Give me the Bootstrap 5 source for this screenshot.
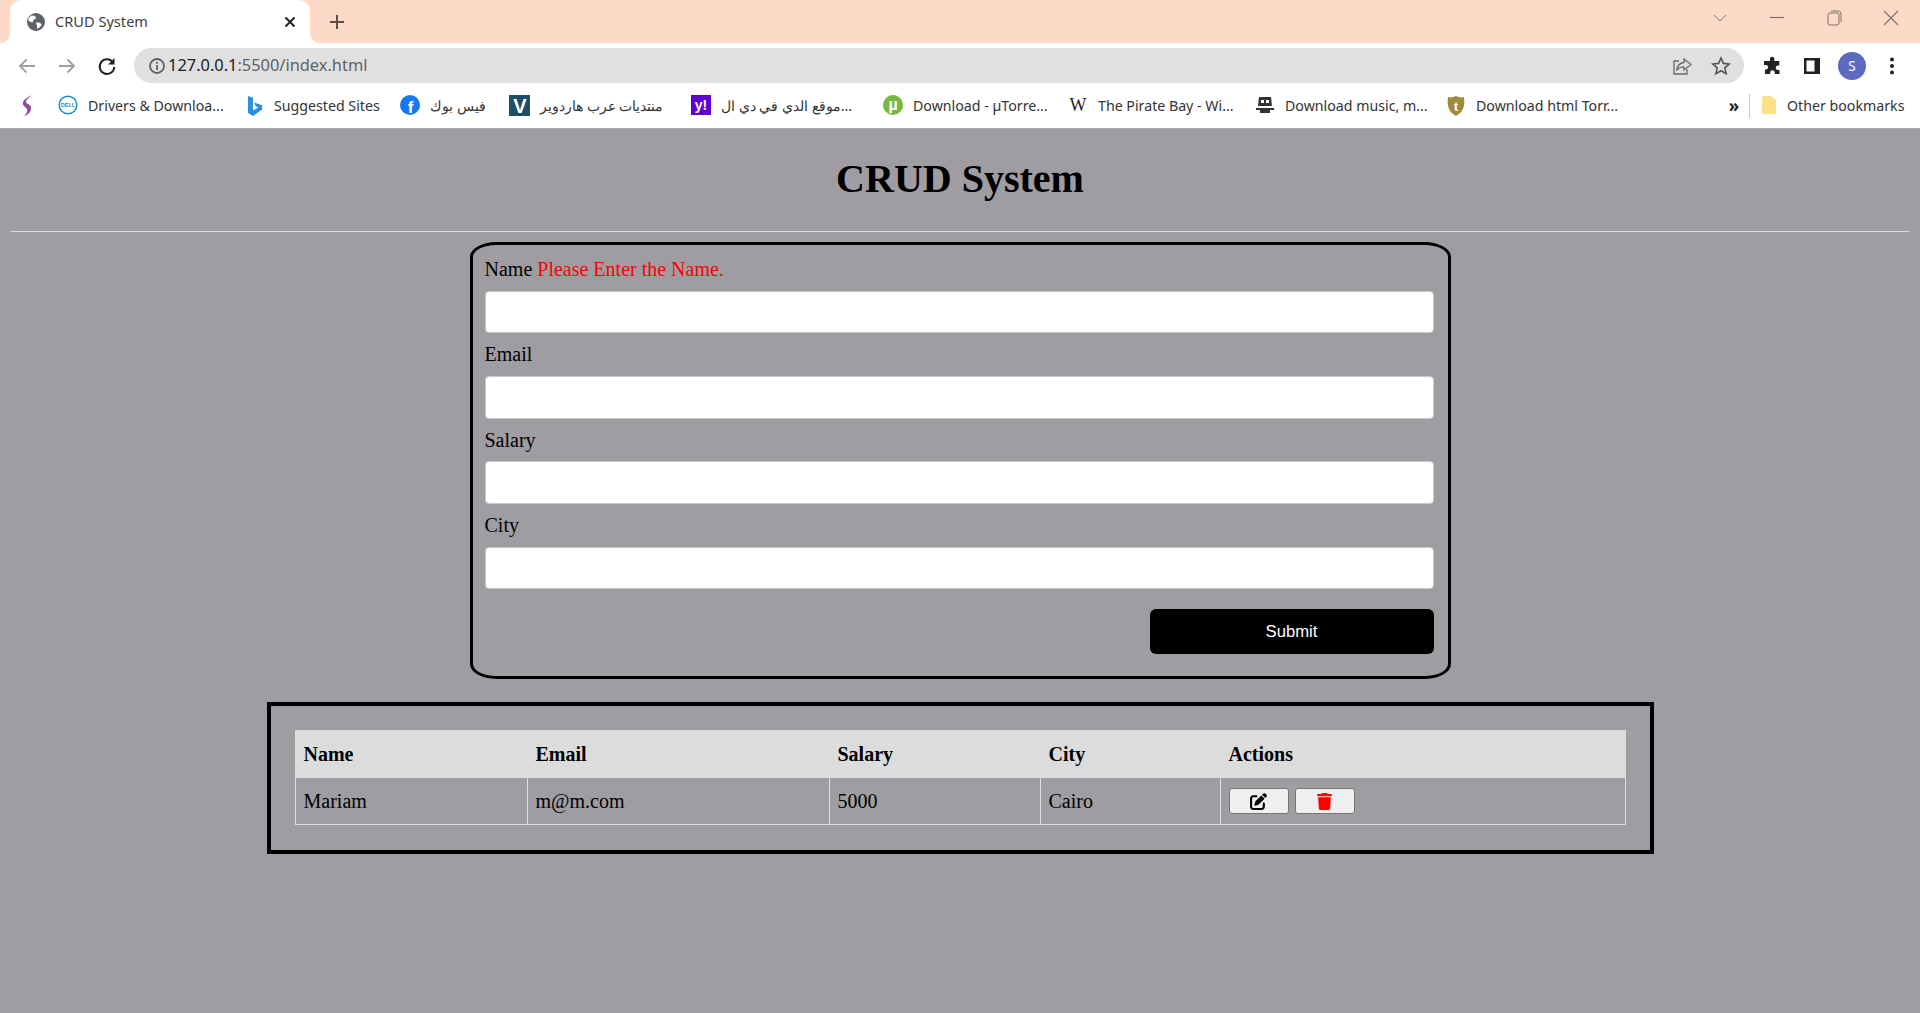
<!doctype html>
<html lang="en">
<head>
<meta charset="utf-8">
<title>CRUD System</title>
<link href="https://cdn.jsdelivr.net/npm/bootstrap@5.3.0/dist/css/bootstrap.min.css" rel="stylesheet">
<style>
html,body{height:100%}
body{background:#9f9da1;color:#000;font-family:"Liberation Serif","Times New Roman",serif;font-size:20px;overflow:hidden}
.ui{font-family:"Noto Sans","Open Sans",sans-serif}
svg{display:block;flex:none}

.tabstrip{height:43px;background:#fcdac7;padding-left:10px}
.tabitem{width:300px;height:43px;background:#fff;border-radius:11px 11px 0 0;position:relative;padding:0 10px 0 16px;font-size:14.6px;color:#3c4043}
.tabitem::before,.tabitem::after{content:"";position:absolute;bottom:0;width:10px;height:10px}
.tabitem::before{left:-10px;background:radial-gradient(circle at 0 0,transparent 9.5px,#fff 10.5px)}
.tabitem::after{right:-10px;background:radial-gradient(circle at 100% 0,transparent 9.5px,#fff 10.5px)}
.tabitem-title{margin-left:9px}
.newtab{margin-left:17px}
.winctl{gap:37px;padding:8px 19px 0 0;align-self:flex-start}

.toolbar{height:40px;background:#fff;padding-left:7px}
.toolbtn{width:40px;height:35px;margin-top:5px}
.omni{width:1610px;height:35px;margin:5px 8px 0 7px;background:#e0e0e0;border-radius:18px;padding:0 13px;font-size:16.4px;color:#5f6368}
.omni-url{margin-left:1px}
.omni-host{color:#202124}
.omni-gap{gap:19px}
.avatar{width:28px;height:28px;background:#5c6bc0;color:#fff;font-size:13.5px;line-height:28px;text-align:center;border-radius:50%}

.bmbar{height:46px;background:#fff;border-bottom:1px solid #a9a9a9;padding-left:18px;display:grid;grid-template-columns:40px 186px 156px 109px 182px 192px 185px 187px 191px 273px 30px 12px 1fr;align-items:center;font-size:14.2px;color:#333;white-space:nowrap}
.bmitem{display:flex;align-items:center;gap:10px}
.bmsep{width:1px;height:24px;background:#c8c8c8}
.bmmore{font-weight:700;font-size:17px;line-height:1;color:#222}

.pagetitle{font-size:40px;font-weight:700;line-height:46px;text-align:center;margin:0;padding:27px 0 29px}
.pagerule{margin:0 11px;border:0;height:1px;background:#dcdcdc;opacity:1}
.formbox{width:981px;margin:10px auto 0;border:3px solid #000;border-radius:26px/15px;padding:3px 14px 22px 12px}
.fieldlabel{display:block;line-height:42.67px;margin:0}
.fielderr{color:#f00}
.fieldinput{height:42.67px;padding:4px 12px;font-size:20px;border:1px solid #c8c8c8;border-radius:4px;background:#fff}
.submitbtn{width:284px;height:45px;margin-top:20px;background:#000;color:#fff;border:0;border-radius:6px;font-family:"Liberation Sans",Arial,sans-serif;font-size:16.67px}
.submitbtn:hover{background:#000;color:#fff}
.tablebox{width:1387px;margin:23px auto 0;border:4px solid #000;padding:24px 25px 25px 24px}
.datatable{--bs-table-bg:transparent;--bs-table-color:#000;--bs-table-border-color:#dcdcdc;table-layout:fixed;width:1330px;margin:0;font-size:20px;border-color:#dcdcdc}
.datatable>*>*>*{padding:0 11px;vertical-align:middle;border-width:1px;border-color:#dcdcdc;box-shadow:none}
.datatable thead th{background:#dcdcdc;height:46px;font-weight:700}
.datatable tbody td{height:47px}
.c1{width:232px}.c2{width:302px}.c3{width:211px}.c4{width:180px}.c5{width:405px}
.rowbtn{width:60px;height:26px;padding:0;background:#efefef;border:1px solid #767676;border-radius:3px;display:flex;align-items:center;justify-content:center}
.rowgap{gap:6px}
</style>
</head>
<body>

<header class="ui">
  <div class="tabstrip d-flex align-items-center">
    <div class="tabitem d-flex align-items-center">
      <svg width="20" height="20" viewBox="0 0 20 20"><circle cx="10" cy="10" r="9" fill="#5f6368"/><path d="M6 3.5c2 0 3.5.7 4 2 .4 1.200-1.200 1.500-2.200 2.300-.9.800-.3 2-1.500 2.400-1.200.3-3-.8-4.300-2.200C3 5.500 4.300 4 6 3.500zM10.500 10.500c1.800-.4 4 .2 5 1.500.3.600-.4 2-1.500 3-.9.800-2.200 1.800-2.800 1.200-.5-.8.100-1.700-.2-2.700-.3-1-1.500-2.400-.5-3z" fill="#fff"/></svg>
      <span class="tabitem-title">CRUD System</span>
      <svg class="ms-auto" width="20" height="20" viewBox="0 0 20 20"><path d="M5.500 5.500l9 9M14.500 5.500l-9 9" stroke="#222" stroke-width="2" fill="none"/></svg>
    </div>
    <svg class="newtab" width="20" height="20" viewBox="0 0 20 20"><path d="M10 3v14M3 10h14" stroke="#5a4f4a" stroke-width="2" fill="none"/></svg>
    <div class="winctl d-flex ms-auto">
      <svg width="20" height="20" viewBox="0 0 20 20"><path d="M4 7l6 6 6-6" stroke="#8d8480" stroke-width="1" fill="none"/></svg>
      <svg width="20" height="20" viewBox="0 0 20 20"><path d="M3 9.500h14" stroke="#7a716d" stroke-width="1.200" fill="none"/></svg>
      <svg width="20" height="20" viewBox="0 0 20 20"><rect x="4" y="5" width="11" height="12" rx="2" stroke="#7a716d" fill="none"/><path d="M7 3h7a3 3 0 0 1 3 3v8" stroke="#7a716d" fill="none"/></svg>
      <svg width="20" height="20" viewBox="0 0 20 20"><path d="M3 3l14 14M17 3L3 17" stroke="#7a716d" stroke-width="1.100" fill="none"/></svg>
    </div>
  </div>

  <div class="toolbar d-flex">
    <div class="toolbtn d-flex align-items-center justify-content-center"><svg width="20" height="20" viewBox="0 0 20 20"><path d="M18 10H3M9.500 3.500L3 10l6.500 6.500" stroke="#9aa0a6" stroke-width="1.800" fill="none"/></svg></div>
    <div class="toolbtn d-flex align-items-center justify-content-center"><svg width="20" height="20" viewBox="0 0 20 20"><path d="M2 10h15M10.500 3.500L17 10l-6.500 6.500" stroke="#9aa0a6" stroke-width="1.800" fill="none"/></svg></div>
    <div class="toolbtn d-flex align-items-center justify-content-center"><svg width="20" height="20" viewBox="0 0 20 20"><path d="M16 6.500A7.300 7.300 0 1 0 17.300 11" stroke="#222" stroke-width="2" fill="none"/><path d="M17.500 2v6.500H11z" fill="#222"/></svg></div>
    <div class="omni d-flex align-items-center">
      <svg width="20" height="20" viewBox="0 0 20 20"><circle cx="10" cy="10" r="7" stroke="#5f6368" stroke-width="1.800" fill="none"/><path d="M10 9v5M10 6v1.800" stroke="#5f6368" stroke-width="1.800" fill="none"/></svg>
      <span class="omni-url"><span class="omni-host">127.0.0.1</span>:5500/index.html</span>
      <div class="d-flex omni-gap ms-auto">
        <svg width="20" height="20" viewBox="0 0 20 20"><path d="M7 5H2v13h13v-5" stroke="#6a6a6a" stroke-width="1.300" fill="none"/><path d="M12 3l7 5.500-7 5.500v-3.200c-3.500 0-5.700 1-7.500 3.700.6-4.500 3-7.500 7.500-8z" stroke="#6a6a6a" stroke-width="1.300" fill="none"/></svg>
        <svg width="20" height="20" viewBox="0 0 20 20"><path d="M10 2l2.400 5.400 5.800.6-4.400 3.900 1.300 5.800L10 14.700l-5.100 3 1.300-5.800L1.800 8l5.800-.6z" stroke="#555" stroke-width="1.600" fill="none"/></svg>
      </div>
    </div>
    <div class="toolbtn d-flex align-items-center justify-content-center"><svg width="20" height="20" viewBox="0 0 20 20"><path d="M8 2.500a2.200 2.200 0 0 1 4.300 0V5h5v4.500h-1.800a2.300 2.300 0 0 0 0 4.500H17.500v4h-4.700v-1.500a2.300 2.300 0 0 0-4.600 0V18H3v-4.500h1.300a2.300 2.300 0 0 0 0-4.500H2V5h6z" fill="#202124"/></svg></div>
    <div class="toolbtn d-flex align-items-center justify-content-center"><svg width="20" height="20" viewBox="0 0 20 20"><rect x="2" y="2" width="16" height="16" fill="#202124"/><rect x="4.500" y="4.500" width="8" height="11" fill="#fff"/></svg></div>
    <div class="toolbtn d-flex align-items-center justify-content-center"><div class="avatar">S</div></div>
    <div class="toolbtn d-flex align-items-center justify-content-center"><svg width="20" height="20" viewBox="0 0 20 20"><circle cx="10" cy="3.500" r="2" fill="#202124"/><circle cx="10" cy="10" r="2" fill="#202124"/><circle cx="10" cy="16.500" r="2" fill="#202124"/></svg></div>
  </div>

  <nav class="bmbar">
    <div class="bmitem"><svg width="20" height="24" viewBox="0 0 20 24"><path d="M13 1c-1 3-5 4-5 7 0 2 5 2 5 6 0 4-3 7-7 8 2-2 4-4 3-7-1-2-5-3-4-7 1-3 5-4 8-7z" fill="#8e4a9c"/></svg></div>
    <div class="bmitem"><svg width="20" height="20" viewBox="0 0 20 20"><circle cx="10" cy="10" r="8.800" fill="#fff" stroke="#1a8ec9" stroke-width="1.500"/><text x="10" y="11.800" text-anchor="middle" font-size="5.500" font-weight="700" font-family="Liberation Sans" fill="#1a8ec9">DELL</text></svg><span>Drivers &amp; Downloa...</span></div>
    <div class="bmitem"><svg width="20" height="24" viewBox="0 0 20 24"><path d="M4 2l5 1.700v12.800l5.300-3-2.700-1.200-1.500-3.800 8 2.800v4.300L9 22l-5-3z" fill="#2b8fe0"/></svg><span>Suggested Sites</span></div>
    <div class="bmitem"><svg width="20" height="20" viewBox="0 0 20 20"><circle cx="10" cy="10" r="10" fill="#1877f2"/><text x="10.500" y="18" text-anchor="middle" font-size="17" font-weight="700" font-family="Liberation Sans" fill="#fff">f</text></svg><span>فيس بوك</span></div>
    <div class="bmitem"><svg width="21" height="21" viewBox="0 0 21 21"><rect width="21" height="21" fill="#1f4e6b"/><text x="11" y="18" text-anchor="middle" font-size="20" font-weight="700" font-family="Liberation Sans" fill="#fff">V</text></svg><span>منتديات عرب هاردوير</span></div>
    <div class="bmitem"><svg width="20" height="20" viewBox="0 0 20 20"><rect width="20" height="20" fill="#5f01d1"/><text x="10" y="15" text-anchor="middle" font-size="14" font-weight="700" font-family="Liberation Sans" fill="#fff">y!</text></svg><span>موقع الدي في دي ال...</span></div>
    <div class="bmitem"><svg width="20" height="20" viewBox="0 0 20 20"><circle cx="10" cy="10" r="10" fill="#76b83f"/><text x="10" y="15" text-anchor="middle" font-size="16" font-weight="700" font-family="Liberation Sans" fill="#fff">µ</text></svg><span>Download - µTorre...</span></div>
    <div class="bmitem"><svg width="20" height="20" viewBox="0 0 20 20"><text x="10" y="16" text-anchor="middle" font-size="18" font-family="Liberation Serif" fill="#222">W</text></svg><span>The Pirate Bay - Wi...</span></div>
    <div class="bmitem"><svg width="20" height="20" viewBox="0 0 20 20"><path d="M4 2h12l1 9H3z" fill="#333"/><rect x="6" y="5" width="3" height="3" fill="#fff"/><rect x="11" y="5" width="3" height="3" fill="#fff"/><path d="M1 13l18 0v2H1zM5 15h10v3H5z" fill="#333"/></svg><span>Download music, m...</span></div>
    <div class="bmitem"><svg width="20" height="22" viewBox="0 0 20 22"><path d="M2 2c3 1 5 0 8-1 3 1 5 2 8 1 1 8 0 15-8 19C2 17 1 10 2 2z" fill="#a08a3e"/><text x="10" y="16" text-anchor="middle" font-size="14" font-weight="700" font-family="Liberation Serif" fill="#fff">t</text></svg><span>Download html Torr...</span></div>
    <div class="bmmore text-center">»</div>
    <div class="bmsep"></div>
    <div class="bmitem"><svg width="16" height="20" viewBox="0 0 16 20"><path d="M1 3a2 2 0 0 1 2-2h7l5 4v12a2 2 0 0 1-2 2H3a2 2 0 0 1-2-2z" fill="#fde08a"/></svg><span>Other bookmarks</span></div>
  </nav>
</header>

<main>
  <h1 class="pagetitle">CRUD System</h1>
  <hr class="pagerule">

  <form class="formbox">
    <label class="fieldlabel" for="fName">Name <span class="fielderr">Please Enter the Name.</span></label>
    <input class="form-control fieldinput" id="fName" type="text">
    <label class="fieldlabel" for="fEmail">Email</label>
    <input class="form-control fieldinput" id="fEmail" type="text">
    <label class="fieldlabel" for="fSalary">Salary</label>
    <input class="form-control fieldinput" id="fSalary" type="text">
    <label class="fieldlabel" for="fCity">City</label>
    <input class="form-control fieldinput" id="fCity" type="text">
    <div class="d-flex justify-content-end">
      <button class="btn submitbtn p-0" type="button">Submit</button>
    </div>
  </form>

  <section class="tablebox">
    <table class="table table-bordered datatable">
      <colgroup><col class="c1"><col class="c2"><col class="c3"><col class="c4"><col class="c5"></colgroup>
      <thead>
        <tr><th>Name</th><th>Email</th><th>Salary</th><th>City</th><th>Actions</th></tr>
      </thead>
      <tbody>
        <tr>
          <td>Mariam</td><td>m@m.com</td><td>5000</td><td>Cairo</td>
          <td>
            <div class="d-flex rowgap">
              <button class="rowbtn" type="button" aria-label="Edit"><svg width="17" height="17" viewBox="0 0 512 512"><path fill="#000" d="M471.600 21.700c-21.900-21.900-57.300-21.900-79.200 0L362.300 51.700l97.900 97.900 30.100-30.100c21.900-21.900 21.900-57.300 0-79.200L471.600 21.700zm-299.200 220c-6.100 6.100-10.800 13.600-13.500 21.900l-29.600 88.800c-2.900 8.600-.6 18.100 5.800 24.600s15.900 8.700 24.600 5.800l88.800-29.600c8.200-2.700 15.700-7.400 21.900-13.500L437.700 172.300 339.700 74.300 172.400 241.700zM96 64C43 64 0 107 0 160V416c0 53 43 96 96 96H352c53 0 96-43 96-96V320c0-17.700-14.300-32-32-32s-32 14.300-32 32v96c0 17.700-14.300 32-32 32H96c-17.700 0-32-14.300-32-32V160c0-17.700 14.300-32 32-32h96c17.700 0 32-14.300 32-32s-14.300-32-32-32H96z"/></svg></button>
              <button class="rowbtn" type="button" aria-label="Delete"><svg width="15" height="17" viewBox="0 0 448 512"><path fill="#f00" d="M135.200 17.700L128 32H32C14.300 32 0 46.300 0 64S14.300 96 32 96H416c17.700 0 32-14.300 32-32s-14.300-32-32-32H320l-7.200-14.300C307.400 6.800 296.300 0 284.200 0H163.800c-12.100 0-23.200 6.800-28.600 17.700zM416 128H32L53.200 467c1.600 25.300 22.600 45 47.900 45H346.900c25.300 0 46.300-19.700 47.900-45L416 128z"/></svg></button>
            </div>
          </td>
        </tr>
      </tbody>
    </table>
  </section>
</main>

<script src="https://cdn.jsdelivr.net/npm/bootstrap@5.3.0/dist/js/bootstrap.bundle.min.js"></script>
</body>
</html>
